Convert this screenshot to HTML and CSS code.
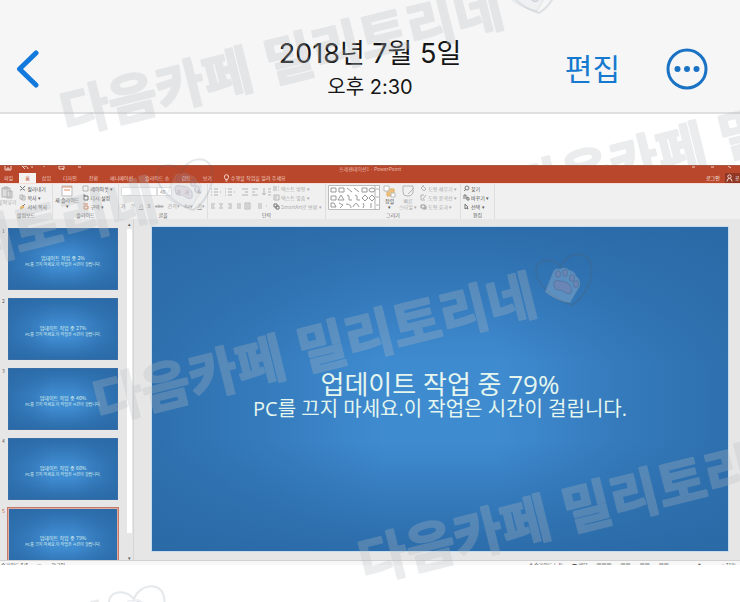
FILE: index.html
```
<!DOCTYPE html>
<html lang="ko">
<head>
<meta charset="utf-8">
<meta name="viewport" content="width=device-width, initial-scale=1">
<title>2018년 7월 5일</title>
<link rel="stylesheet" href="styles.css">
</head>
<body>
<div class="page">
  <header class="topbar">
    <button class="back" aria-label="뒤로"><svg width="24" height="38" viewBox="0 0 24 38"><path d="M20 3 3.500 19 20 35" /></svg></button>
    <div class="when">
      <h1>2018년 7월 5일</h1>
      <p>오후 2:30</p>
    </div>
    <div class="actions">
      <button class="edit">편집</button>
      <button class="more" aria-label="더 보기"><svg width="42" height="42" viewBox="0 0 42 42"><circle class="ring" cx="21" cy="21" r="19"/><circle cx="11.500" cy="21" r="3"/><circle cx="21" cy="21" r="3"/><circle cx="30.500" cy="21" r="3"/></svg></button>
    </div>
  </header>

  <svg class="watermark" aria-hidden="true">
    <g transform="translate(539 185)"><text x="-24" y="19" transform="rotate(-14)">다음카페 밀리토리네</text></g>
  </svg>

  <main class="app">
    <div class="titlebar">
      <svg class="quick" width="90" height="8" viewBox="0 0 90 8"><path d="M5 0v4h6V0M7 4V2h2v2M22 0l3 3M23 0q5 0 5 3M31 1h2M43 0h2M59 0h5v3h-5zM62 2l2 2M78 1h3"/></svg>
      <span class="doc">프레젠테이션1 - PowerPoint</span>
      <svg class="win" width="50" height="8" viewBox="0 0 50 8"><path d="M2 1h3M21 1h3M38 0l3 2"/></svg>
    </div>
    <nav class="tabs">
      <button>파일</button><button class="active">홈</button><button>삽입</button><button>디자인</button><button>전환</button><button>애니메이션</button><button>슬라이드 쇼</button><button>검토</button><button>보기</button>
      <button class="tell"><svg width="5" height="8" viewBox="0 0 5 8"><path d="M1.500 5.500Q0 3.500.6 2a2 2 0 0 1 3.800 0Q5 3.500 3.500 5.500ZM1.500 7h2"/></svg>수행할 작업을 알려 주세요</button>
      <span class="account"><button>로그인</button><button class="share"><svg width="7" height="8" viewBox="0 0 7 8"><circle cx="3.500" cy="2.500" r="1.700"/><path d="M1 7.500q0-3 2.500-3t2.500 3"/></svg>공유</button></span>
    </nav>

    <section class="ribbon">
      <div class="group clip">
        <div class="tools">
          <button class="big dim"><svg width="14" height="14" viewBox="0 0 14 14"><path d="M2 3h8v9H2zM4 2h4v2H4zM7 6h5v7H7z" class="fillgray"/></svg>붙여넣기</button>
          <div class="col">
            <button><svg width="7" height="7" viewBox="0 0 7 7"><path d="M1 1l4 4M6 1 2 5M1 5h1M5 5h1" class="dark"/></svg>잘라내기</button>
            <button><svg width="7" height="7" viewBox="0 0 7 7"><path d="M1 1h3v4H1zM3 2h3v4H3z"/></svg>복사 ▾</button>
            <button><svg width="7" height="7" viewBox="0 0 7 7"><path d="M1 5l3-3 1 2-3 2z" class="gold"/><path d="M4 3l2-2" class="dark"/></svg>서식 복사</button>
          </div>
        </div>
        <div class="label">클립보드</div>
      </div>
      <div class="group slides">
        <div class="tools">
          <button class="big"><svg width="12" height="12" viewBox="0 0 12 12"><path d="M1 1h10v10H1z" class="paper"/><path d="M1 2h10M3 5h6" class="orange"/></svg>새 슬라이드<i>▾</i></button>
          <div class="col">
            <button><svg width="7" height="7" viewBox="0 0 7 7"><path d="M1 1h5v5H1z"/></svg>레이아웃 ▾</button>
            <button><svg width="7" height="7" viewBox="0 0 7 7"><path d="M2 2h4v4H2zM1 1h2v2" class="dark"/></svg>다시 설정</button>
            <button><svg width="7" height="7" viewBox="0 0 7 7"><path d="M1 1h5M2 3h4v3H2z" class="orange"/></svg>구역 ▾</button>
          </div>
        </div>
        <div class="label">슬라이드</div>
      </div>
      <div class="group font">
        <div class="tools stack">
          <div class="line"><input aria-label="글꼴" value=""><select aria-label="글꼴 크기"><option>40</option></select><button>가</button><button>가</button><button class="push">A̷</button></div>
          <div class="line marks"><button><b>가</b></button><button><em>가</em></button><button><u>가</u></button><button><b>S</b></button><button><s>abc</s></button><button>간격▾</button><button>Aa▾</button><button><u>가</u>▾</button></div>
        </div>
        <div class="label">글꼴</div>
      </div>
      <div class="group para">
        <div class="tools">
          <div class="stack">
            <svg width="62" height="10" viewBox="0 0 62 10"><path d="M1 2h1M4 2h4M1 5h1M4 5h4M1 8h1M4 8h4M15 2h1M18 2h4M15 5h1M18 5h4M15 8h1M18 8h4M32 2h6M35 5h3M32 8h6M42 2h6M42 5h3M42 8h6M54 1v7M52 6l2 2 2-2M58 2h3M58 5h3M58 8h3M10 5h1M24 5h1"/></svg>
            <svg width="62" height="9" viewBox="0 0 62 9"><path d="M1 2h4M1 4h3M1 6h4M9 2h4M10 4h2M9 6h4M18 2h4M19 4h3M18 6h4M27 2h4M27 4h4M27 6h4M35 1h5v6h-5zM36 3h3M36 5h3M48 2h4M48 4h4M48 6h4M56 4h1"/></svg>
          </div>
          <div class="col dim">
            <button><svg width="7" height="7" viewBox="0 0 7 7"><path d="M1 1v5M3 1v5M5 2h1M5 5h1"/></svg>텍스트 방향 ▾</button>
            <button><svg width="7" height="7" viewBox="0 0 7 7"><path d="M1 1h5v5H1zM3 2v3"/></svg>텍스트 맞춤 ▾</button>
            <button><svg width="7" height="7" viewBox="0 0 7 7"><path d="M1 1h3v3H1zM3 3h3v3H3z" class="dark"/></svg>SmartArt로 변환 ▾</button>
          </div>
        </div>
        <div class="label">단락</div>
      </div>
      <div class="group draw">
        <div class="tools">
          <svg class="shapes" width="52" height="25" viewBox="0 0 52 25"><path d="M.5.500h51v24H.5z" class="paper"/><path d="M3 3h5v4H3zM11 3h5v4h-5zM19 3l5 4M26 3l5 4M34 3h5v4h-5zM3 11h5v4H3zM10 15l3-5 3 5zM19 10l2 1v4h3M27 10l2 1v4h3M34 13l3-3 3 3-3 3zM41 13l3-3 3 3-3 3zM3 18h3l2 4H3zM11 18l4 2-3 3M18 19q5 0 5 4M25 22q3-7 6 0M35 18q2 2 0 5M43 18v5" class="mid"/><ellipse cx="44" cy="5" rx="3" ry="2" class="mid"/><path d="M47 .5v24M48 4h3M48 12h3M48 20h3"/></svg>
          <button class="big"><svg width="13" height="13" viewBox="0 0 13 13"><path d="M4 4h7v7H4z" class="gold"/><path d="M1 1h5v5H1zM8 8h4v4H8z" class="paper"/></svg>정렬<i>▾</i></button>
          <button class="big dim"><svg width="13" height="13" viewBox="0 0 13 13"><path d="M1 1h10v7q-2 4-6 3-4 0-4-4zM6 9l6-6"/></svg>빠른<br>스타일 ▾</button>
          <div class="col dim">
            <button><svg width="7" height="7" viewBox="0 0 7 7"><path d="M1 3l2-2 3 3-2 2zM3 0v2"/></svg>도형 채우기 ▾</button>
            <button><svg width="7" height="7" viewBox="0 0 7 7"><path d="M1 1h3M1 1v5h4M3 5l3-4"/></svg>도형 윤곽선 ▾</button>
            <button><svg width="7" height="7" viewBox="0 0 7 7"><path d="M1 2h4v3H1zM3 6h3V3" class="mid"/></svg>도형 효과 ▾</button>
          </div>
        </div>
        <div class="label">그리기</div>
      </div>
      <div class="group find">
        <div class="tools">
          <div class="col">
            <button><svg width="7" height="7" viewBox="0 0 7 7"><circle cx="4" cy="3" r="2" class="dark"/><path d="M1 6l2-2" class="dark"/></svg>찾기</button>
            <button><svg width="7" height="7" viewBox="0 0 7 7"><path d="M1 5V1h2v4M4 3v3h2V4z" class="dark"/></svg>바꾸기 ▾</button>
            <button><svg width="7" height="7" viewBox="0 0 7 7"><path d="M2 1v5l1-1 2 1-1-2h1z" class="dark"/></svg>선택 ▾</button>
          </div>
        </div>
        <div class="label">편집</div>
      </div>
    </section>

    <section class="work">
      <ol class="thumbs">
        <li><span>1</span><div class="thumb"><b>업데이트 작업 중 2%</b><small>PC를 끄지 마세요.이 작업은 시간이 걸립니다.</small></div></li>
        <li><span>2</span><div class="thumb"><b>업데이트 작업 중 27%</b><small>PC를 끄지 마세요.이 작업은 시간이 걸립니다.</small></div></li>
        <li><span>3</span><div class="thumb"><b>업데이트 작업 중 40%</b><small>PC를 끄지 마세요.이 작업은 시간이 걸립니다.</small></div></li>
        <li><span>4</span><div class="thumb"><b>업데이트 작업 중 60%</b><small>PC를 끄지 마세요.이 작업은 시간이 걸립니다.</small></div></li>
        <li class="current"><span>5</span><div class="thumb"><b>업데이트 작업 중 79%</b><small>PC를 끄지 마세요.이 작업은 시간이 걸립니다.</small></div></li>
      </ol>
      <div class="scroll"><i>▴</i><div class="grip"></div><i>▾</i></div>
      <div class="stage">
        <article class="slide">
          <h2>업데이트 작업 중 79%</h2>
          <p>PC를 끄지 마세요.이 작업은 시간이 걸립니다.</p>
        </article>
      </div>
    </section>

    <footer class="status">
      <span>슬라이드 5/5</span><span>▭</span><span>한국어</span>
      <span class="notes">≜ 슬라이드 노트</span><span>■ 메모</span><span class="view">▦▦▦</span><span>▦▦</span><span>▦▦</span><span>▦▦</span><span class="zoom">▮</span><span>+ 71%</span>
    </footer>
  </main>

  <svg class="watermark" aria-hidden="true">
    <defs>
      <g id="paw">
        <path class="heart" d="M8 25C-8 20-27 5-28-8-29-22-12-23-3-13 2-28 24-31 27-15 30 0 20 18 8 25Z"/>
        <path class="arm" d="M-19 12-11-8Q-9-13-4-11 1-14 5-10 11-9 12-4 17-1 16 6L6 23Q-8 21-19 12Z"/>
        <path class="pad" d="M-10 5Q-11-1-4 1 4 1 7 7 9 16 2 13-2 9-7 10-10 9-10 5Z"/>
        <ellipse class="pad" cx="-6" cy="-6" rx="2.500" ry="3.500"/><ellipse class="pad" cx="1" cy="-7" rx="2.500" ry="3.500"/><ellipse class="pad" cx="8" cy="-2" rx="2.500" ry="3.500"/><ellipse class="pad" cx="12" cy="4" rx="2.500" ry="3.500"/>
      </g>
    </defs>
    <g transform="translate(85 110)"><text x="-24" y="19" transform="rotate(-14)">다음카페 밀리토리네</text><use href="#paw" x="446" y="-122"/></g>
    <g transform="translate(118 398)"><text x="-24" y="19" transform="rotate(-14)">다음카페 밀리토리네</text><use class="onblue" href="#paw" x="446" y="-118"/></g>
    <g transform="translate(383 558)"><text x="-24" y="19" transform="rotate(-14)">다음카페 밀리토리네</text></g>
    <g transform="translate(-261 303)"><text x="-24" y="19" transform="rotate(-14)">다음카페 밀리토리네</text><use href="#paw" x="446" y="-118"/></g>
    <g transform="translate(-309 728)"><text x="-24" y="19" transform="rotate(-14)">다음카페 밀리토리네</text><use href="#paw" x="446" y="-116"/></g>
  </svg>
</div>
</body>
</html>
```
FILE: styles.css
```
* { box-sizing: border-box; }
body { margin: 0; background: #fff; color: #161616; font-family: Inter, "Noto Sans CJK KR", sans-serif; }
h1, h2, p, ol { margin: 0; padding: 0; font-weight: 400; }
button { border: 0; padding: 0; margin: 0; background: none; color: inherit; font: inherit; line-height: inherit; white-space: nowrap; }
svg { display: block; flex: none; fill: none; }
.page { position: relative; min-height: 100vh; overflow: hidden; }

/* Photo viewer header */
.topbar { display: grid; grid-template-columns: 1fr auto 1fr; align-items: center; padding: 36px 32px 10px 16px; background: #f6f6f6; border-bottom: 2px solid #dfdfdf; }
.back { justify-self: start; }
.back path { stroke: #1479dc; stroke-width: 5; stroke-linecap: round; stroke-linejoin: round; }
.when { text-align: center; padding-left: 16px; }
.when h1 { font-size: 27px; line-height: 36px; }
.when p { font-size: 20px; line-height: 30px; }
.actions { display: flex; justify-content: flex-end; align-items: center; gap: 46px; color: #1479cf; }
.edit { font-size: 30px; line-height: 40px; }
.more svg { fill: #1a72c4; }
.more .ring { fill: none; stroke: #1a72c4; stroke-width: 3; }

/* Presentation window */
.app { position: relative; margin-top: 51px; background: #e6e6e6; font-family: "Noto Sans CJK KR", sans-serif; font-size: 5px; color: #555; }
.titlebar { display: grid; grid-template-columns: 1fr auto 1fr; height: 8px; overflow: hidden; background: #b9472b; color: #e8bdb0; border-top: 1px solid #a85a45; line-height: 5px; }
.titlebar svg { stroke: #f1d4cb; }
.win { justify-self: end; }
.tabs { display: flex; align-items: center; gap: 12px; height: 10px; padding-left: 4px; background: #b9472b; color: #f3cfc4; line-height: 10px; }
.tabs .active { margin: 0 -6px; padding: 0 6px; background: #f5f2f0; color: #b9472b; }
.tell { display: flex; align-items: center; gap: 2px; }
.tell svg, .share svg { stroke: #f6d8cf; }
.account { display: flex; gap: 5px; margin-left: auto; color: #fff; width: 34px; overflow: hidden; }
.share { display: flex; align-items: center; gap: 2px; padding-left: 1px; background: #8f3722; }

.ribbon { display: flex; height: 36px; background: #f0f0f0; border-top: 1px solid #f6ded6; }
.ribbon svg { stroke: #b4b4b4; }
.ribbon .dark { stroke: #777; }
.ribbon .mid { stroke: #999; }
.ribbon .gold { fill: #edc07c; stroke: #e0ad66; }
.ribbon .orange { stroke: #d88d68; }
.ribbon .paper { fill: #fff; stroke: #bbb; }
.ribbon .fillgray { fill: #ddd; }
.group { display: flex; flex-direction: column; justify-content: space-between; border-right: 1px solid #dedede; overflow: hidden; }
.tools { display: flex; gap: 3px; height: 27px; padding: 0 2px; }
.label { text-align: center; line-height: 8px; color: #666; }
.col { display: flex; flex-direction: column; }
.col button { display: flex; align-items: center; gap: 1px; height: 9px; }
.big { display: flex; flex-direction: column; align-items: center; line-height: 6px; padding-top: 1px; }
.big i, .scroll i { font-style: normal; line-height: 5px; }
.dim, .font .tools { color: #aaa; }
.clip { width: 53px; }
.clip .big { margin-left: -4px; }
.slides { width: 66px; }
.font { width: 89px; }
.para { width: 118px; }
.para .tools { gap: 1px; }
.draw { width: 135px; }
.find { width: 34px; }
.stack { display: flex; flex-direction: column; gap: 5px; padding-top: 3px; }
.line { display: flex; align-items: center; gap: 4px; line-height: 9px; }
.line input { width: 36px; height: 9px; padding: 0; border: 1px solid #ddd; background: #fff; font: inherit; }
.line select { width: 15px; height: 9px; margin-left: -4px; padding: 0 2px; border: 1px solid #ddd; background: #fff; color: #999; font: inherit; line-height: 7px; appearance: none; }
.line .push { margin-left: 4px; }
.marks { justify-content: space-between; gap: 1px; }
.shapes { margin-top: 1px; }

/* Slide list and canvas */
.work { display: grid; grid-template-columns: 126px 8px 1fr; border-bottom: 1px solid #d2d2d2; }
.thumbs { list-style: none; height: 0; min-height: 100%; overflow: hidden; padding-top: 9px; display: flex; flex-direction: column; gap: 8px; }
.thumbs li { display: flex; flex: none; gap: 3px; padding-left: 2px; line-height: 6px; }
.thumbs li > span { width: 3px; }
.thumb, .slide { background: linear-gradient(90deg, #2a69a6cc 0, #2a69a680 18%, #2a69a600 40%, #2a69a600 60%, #2a69a680 82%, #2a69a6cc 100%), linear-gradient(#2a69a6e6 0, #2a69a680 20%, #2a69a600 42%, #2a69a600 66%, #2a69a680 84%, #2a69a6e6 100%), #3f8bd0; }
.thumb { display: flex; flex-direction: column; justify-content: center; align-items: center; width: 110px; height: 62px; padding-top: 4px; color: #dcf2ef; white-space: nowrap; border: 1px solid #3a6fa5; }
.thumb b { font-weight: 400; font-size: 5px; line-height: 6px; }
.thumb small { font-size: 4px; line-height: 6px; }
.current span { color: #c45c43; }
.current .thumb { outline: 1px solid #c47a6b; border-color: #e0aca0; }
.scroll { display: flex; flex-direction: column; align-items: center; padding: 2px 0 0; border-right: 1px solid #d5d5d5; }
.grip { width: 5px; flex: 1; margin: 3px 0 22px; background: #fff; }
.stage { padding: 8px 12px 9px 18px; }
.slide { aspect-ratio: 16 / 9; display: flex; flex-direction: column; align-items: center; justify-content: center; padding-top: 12px; color: #e4f6ee; font-family: "Open Sans", "Noto Sans CJK KR", sans-serif; outline: 1px solid #c5dcee; }
.slide h2 { font-size: 26px; line-height: 28px; }
.slide p { font-size: 20px; line-height: 22px; }
.status { display: flex; gap: 9px; height: 4px; overflow: hidden; padding: 0 4px 0 1px; background: #f7f7f7; line-height: 7px; white-space: nowrap; }
.notes { margin-left: auto; }
.zoom { margin: 0 12px 0 20px; }

/* Diagonal overlay */
.watermark { position: absolute; inset: 0; width: 100%; height: 100%; pointer-events: none; }
.watermark text { font: 700 53px "Noto Sans CJK KR", sans-serif; fill: #b8bcbf; stroke: #b8bcbf; stroke-width: 2; stroke-linejoin: round; opacity: .28; }
.watermark use { opacity: .5; }
.watermark .onblue { opacity: 1; }
.heart { stroke: #4b6074; stroke-opacity: .28; stroke-width: 2; }
.arm { fill: #c9d4dc; fill-opacity: .28; stroke: #52718d; stroke-opacity: .25; }
.pad { fill: #95709f; fill-opacity: .28; stroke: #3d5879; stroke-opacity: .35; }
```
